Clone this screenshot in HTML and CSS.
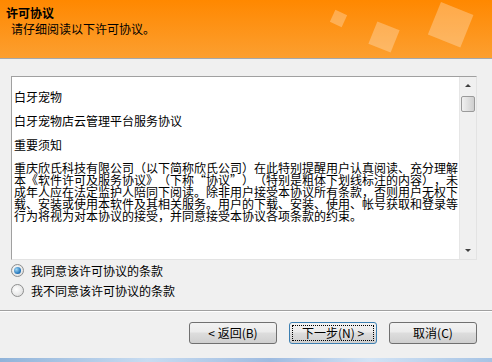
FILE: index.html
```html
<!DOCTYPE html>
<html lang="zh-CN">
<head>
<meta charset="UTF-8" />
<title>许可协议</title>
<link rel="stylesheet" href="styles.css">
</head>
<body>

<!-- Header -->
<div class="header">
  <div class="title">许可协议</div>
  <div class="subtitle">请仔细阅读以下许可协议。</div>
  <svg class="deco" width="192" height="58" viewBox="0 0 192 58">
    <rect x="32" y="12" width="13" height="13" transform="rotate(25 38.5 18.5)" fill="#fff" fill-opacity="0.28"/>
    <rect x="72" y="25" width="24" height="24" transform="rotate(22 84 37)" fill="#fff" fill-opacity="0.28"/>
    <rect x="133" y="7" width="35" height="35" transform="rotate(22 150 25)" fill="#fff" fill-opacity="0.28"/>
  </svg>
</div>

<!-- License text -->
<div class="license">
  <div class="license-text">
    <p>白牙宠物</p>
    <p>白牙宠物店云管理平台服务协议</p>
    <p>重要须知</p>
    <p class="body-text">重庆欣氏科技有限公司（以下简称欣氏公司）在此特别提醒用户认真阅读、充分理解本《软件许可及服务协议》（下称“协议”）（特别是粗体下划线标注的内容），未成年人应在法定监护人陪同下阅读。除非用户接受本协议所有条款，否则用户无权下载、安装或使用本软件及其相关服务。用户的下载、安装、使用、帐号获取和登录等行为将视为对本协议的接受，并同意接受本协议各项条款的约束。</p>
  </div>
  <div class="scrollbar">
    <span class="arrow up"></span>
    <span class="thumb"></span>
    <span class="track"></span>
    <span class="arrow down"></span>
  </div>
</div>

<!-- Choices -->
<div class="choices">
  <label class="choice"><span class="radio checked"></span>我同意该许可协议的条款</label>
  <label class="choice"><span class="radio"></span>我不同意该许可协议的条款</label>
</div>

<!-- Buttons -->
<div class="footer">
  <button class="btn">&lt; 返回(B)</button>
  <button class="btn focused"><span class="focus-ring">下一步(N) &gt;</span></button>
  <button class="btn">取消(C)</button>
</div>

<div class="frame-edge"></div>

</body>
</html>
```

FILE: styles.css
```css
* {
  margin: 0; padding: 0; box-sizing: border-box;
}
body {
  width: 492px;
  height: 362px;
  overflow: hidden;
  background: #f0f0f0;
  color: #000;
  font-family: "Noto Sans CJK SC", "Liberation Sans", sans-serif;
  font-size: 12px;
  display: flex;
  flex-direction: column;
}
.header {
  position: relative;
  height: 59px;
  background: linear-gradient(#ff8800, #fc9f30);
  border-bottom: 1px solid #a3a8ae;
  padding: 5px 0 0 6px;
  flex-shrink: 0;
}
.title {
  font-weight: 700;
  line-height: 15px;
}
.subtitle {
  margin: 1px 0 0 5px;
  line-height: 15px;
}
.deco {
  position: absolute;
  right: 0;
  top: 0;
}
.license {
  display: flex;
  width: 466px;
  height: 184px;
  margin: 17px 0 0 11px;
  border: 1px solid;
  border-color: #a0a0a0 #e3e3e3 #e3e3e3 #a0a0a0;
  background: #fff;
}
.license-text {
  flex: 1;
  padding: 13px 0 0 2px;
  overflow: hidden;
  line-height: 14px;
  text-spacing-trim: space-all;
}
.license-text p {
  margin-bottom: 10px;
}
.license-text .body-text {
  width: 446px;
  line-height: 12px;
  word-break: break-all;
  font-feature-settings: "fwid";
}
.scrollbar {
  width: 17px;
  display: flex;
  flex-direction: column;
  align-items: center;
  background: #f0f0f0;
  border-left: 1px solid #e6e6e6;
}
.arrow {
  height: 17px;
  width: 100%;
  display: flex;
  justify-content: center;
  align-items: center;
}
.arrow::after {
  content: "";
  border-left: 3px solid transparent;
  border-right: 3px solid transparent;
}
.arrow.up::after {
  border-bottom: 3px solid #404040;
}
.arrow.down::after {
  border-top: 3px solid #404040;
}
.thumb {
  width: 14px;
  height: 16px;
  margin-top: 2px;
  border: 1px solid #9a9a9a;
  border-radius: 2px;
  background: linear-gradient(to right, #f0f0f0, #dcdcdc 60%, #cfcfcf);
}
.track {
  flex: 1;
}
.choices {
  padding-left: 11px;
}
.choice {
  display: flex;
  align-items: center;
  height: 20px;
  gap: 7px;
}
.radio {
  width: 13px;
  height: 13px;
  border-radius: 50%;
  border: 1px solid #8e8f8f;
  background: radial-gradient(circle at 40% 40%, #ffffff, #d8d8d8);
  display: flex;
  justify-content: center;
  align-items: center;
}
.radio.checked::after {
  content: "";
  width: 7px;
  height: 7px;
  border-radius: 50%;
  background: radial-gradient(circle at 35% 35%, #9fd7f5, #1d6fb6 70%, #0f4f8e);
}
.footer {
  display: flex;
  justify-content: flex-end;
  gap: 12px;
  margin-top: 10px;
  border-top: 1px solid #a0a0a0;
  box-shadow: inset 0 1px 0 #ffffff;
  padding: 11px 15px 0 0;
  height: 48px;
}
.btn {
  width: 88px;
  height: 22px;
  border: 1px solid #707070;
  border-radius: 3px;
  background: linear-gradient(#f2f2f2, #ebebeb 45%, #dddddd 50%, #cfcfcf);
  font-family: inherit;
  font-size: 12px;
  color: #000;
  line-height: 18px;
}
.btn.focused {
  border-color: #3c7fb1;
  padding: 2px;
}
.focus-ring {
  display: block;
  height: 100%;
  border: 1px dotted #000;
  line-height: 14px;
}
.frame-edge {
  height: 4px;
  margin-top: auto;
  background: linear-gradient(to right, #90b3d9, #c8dcf1 30%, #9ebbe0 55%, #d2e3f5 75%, #a6c3e4);
}
```
